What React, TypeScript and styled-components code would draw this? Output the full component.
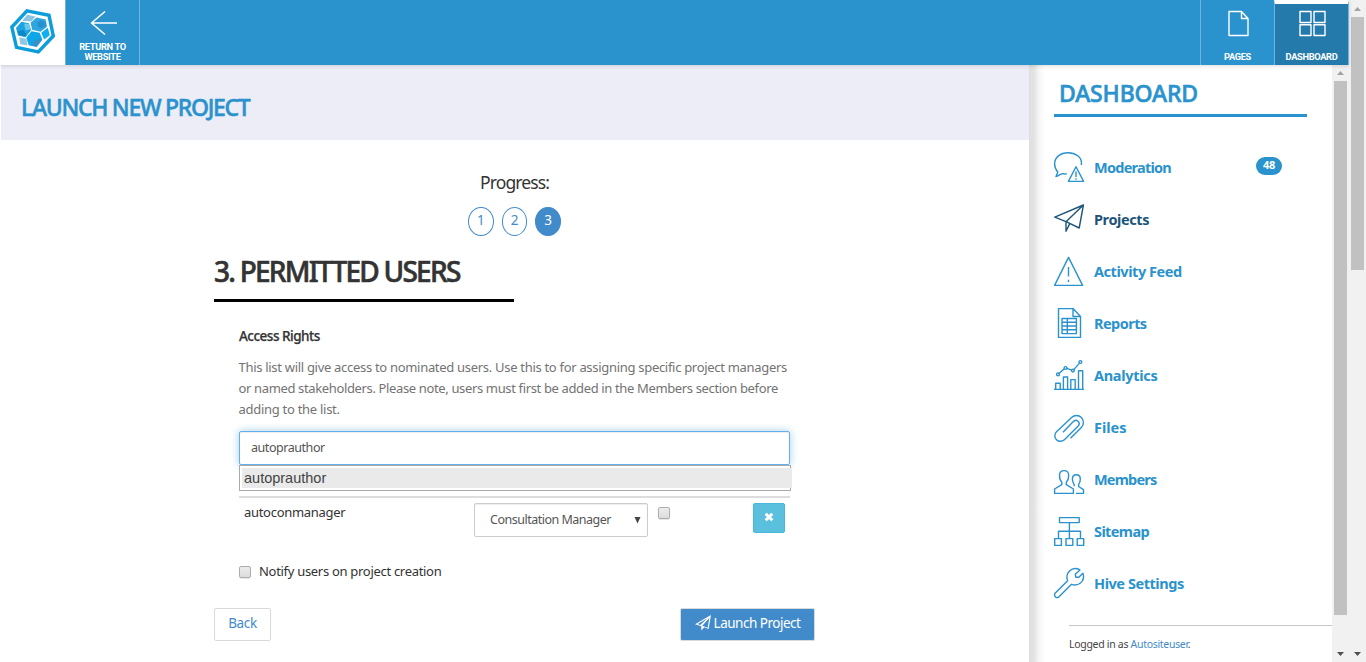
import React from 'react';
import styled, { createGlobalStyle, css } from 'styled-components';

const blue = '#2a92cc';
const link = '#428bca';

const GlobalStyle = createGlobalStyle`
  *, *::before, *::after { box-sizing: border-box; }
  html, body { margin: 0; height: 100%; overflow: hidden; background: #fff; }
  body { font-family: 'Noto Sans', 'Open Sans', sans-serif; font-size: 13px; color: #333; }
  h1, h2, h3, p, ul { margin: 0; padding: 0; font-weight: inherit; }
  button { font-family: inherit; margin: 0; }
`;

const Window = styled.div`
  display: flex;
  width: 1366px;
  height: 662px;
  overflow: hidden;
`;
const Page = styled.div`
  display: flex;
  flex-direction: column;
  width: 1349px;
`;
const TopBar = styled.header`
  display: flex;
  height: 65px;
  flex: none;
  background: ${blue};
  box-shadow: 0 1px 4px rgba(0, 0, 0, 0.14);
  z-index: 2;
`;
const LogoCell = styled.div`
  width: 65px;
  padding: 9px 0 0 10px;
  background: #fff;
`;
const Tile = styled.div<{ $active?: boolean; $last?: boolean }>`
  display: flex;
  flex-direction: column;
  align-items: center;
  justify-content: space-between;
  width: ${p => (p.$last ? 75 : 74)}px;
  padding: 10px 0 3px;
  border-left: 1px solid #6fb5dd;
  ${p => p.$last && css`border-right: 1px solid #6fb5dd;`}
  ${p => p.$active && css`
    background: #247bab;
    border-top: 4px solid #fff;
    padding-top: 6px;
  `}
`;
const TileLabel = styled.span`
  font-family: Roboto, 'Noto Sans', sans-serif;
  font-size: 9.3px;
  font-weight: 700;
  line-height: 10px;
  letter-spacing: -0.35px;
  color: #fff;
  text-align: center;
`;
const Spacer = styled.div`flex: 1;`;
const Columns = styled.div`
  display: flex;
  flex: 1;
  min-height: 0;
`;
const Main = styled.main`
  width: 1028px;
  margin-left: 1px;
`;
const TitleBand = styled.div`
  height: 75px;
  padding: 26px 20px 0;
  background: #ecedf6;
`;
const PageTitle = styled.h1`
  font-size: 23px;
  line-height: 32px;
  font-weight: 500;
  letter-spacing: -1.3px;
  color: ${blue};
  -webkit-text-stroke: 0.5px ${blue};
`;
const Wizard = styled.section`
  width: 601px;
  margin-left: 213px;
  padding-top: 29px;
`;
const ProgressLabel = styled.div`
  font-size: 17.5px;
  line-height: 26px;
  font-weight: 400;
  letter-spacing: -0.9px;
  text-align: center;
`;
const Steps = styled.div`
  display: flex;
  justify-content: center;
  gap: 8px;
  margin-top: 12px;
`;
const Step = styled.div<{ $current?: boolean }>`
  width: 25.7px;
  height: 29px;
  border: 1px solid ${link};
  border-radius: 50%;
  font-size: 13.5px;
  line-height: 25px;
  text-align: center;
  background: ${p => (p.$current ? link : '#fff')};
  color: ${p => (p.$current ? '#fff' : link)};
`;
const SectionTitle = styled.h2`
  width: 300px;
  margin-top: 15px;
  height: 51px;
  border-bottom: 3px solid #000;
  font-size: 28px;
  line-height: 41px;
  font-weight: 500;
  letter-spacing: -1.75px;
  -webkit-text-stroke: 0.6px #333;
  white-space: nowrap;
`;
const Fields = styled.div`
  width: 551px;
  margin: 25px 0 0 25px;
`;
const FieldTitle = styled.h3`
  font-size: 13.5px;
  line-height: 19px;
  font-weight: 500;
  letter-spacing: -0.5px;
  -webkit-text-stroke: 0.25px #333;
`;
const Help = styled.p`
  margin: 11px 0 0 -0.5px;
  color: #737373;
  line-height: 21px;
  white-space: nowrap;
`;
const HelpLine = styled.span<{ $ls: number }>`
  display: block;
  letter-spacing: ${p => p.$ls}px;
`;
const SearchBox = styled.div`
  height: 34px;
  margin-top: 11px;
  padding: 0 11px;
  border: 1px solid #66afe9;
  border-radius: 2px;
  box-shadow: inset 0 1px 1px rgba(0, 0, 0, 0.075), 0 0 8px rgba(102, 175, 233, 0.6);
  font-size: 12.5px;
  line-height: 31px;
  letter-spacing: -0.45px;
  color: #555;
`;
const Suggestions = styled.div`
  position: relative;
  width: 552px;
  height: 26px;
  padding: 2px;
  border: 1px solid #aaa;
  background: #fff;
`;
const Suggestion = styled.div`
  width: 550px;
  height: 20px;
  padding-left: 2px;
  background: #eaeaea;
  font: 14.5px/20px 'Liberation Sans', sans-serif;
  color: #444;
`;
const UserRow = styled.div`
  display: flex;
  align-items: flex-start;
  height: 56px;
  margin-top: 5px;
  padding: 5px 5px 0;
  border-top: 2px solid #ddd;
`;
const UserName = styled.div`
  width: 230px;
  line-height: 19px;
  letter-spacing: -0.3px;
`;
const RoleSelect = styled.div`
  display: flex;
  justify-content: space-between;
  width: 174px;
  height: 34px;
  padding: 0 6px 0 15px;
  border: 1px solid #ccc;
  border-radius: 2px;
  box-shadow: inset 0 1px 1px rgba(0, 0, 0, 0.075);
  font-size: 12.5px;
  line-height: 31px;
  letter-spacing: -0.5px;
  color: #555;
`;
const Caret = styled.svg`
  margin-top: 13px;
`;
const Check = styled.span`
  display: inline-block;
  flex: none;
  width: 12px;
  height: 12px;
  border: 1px solid #adadad;
  border-radius: 2px;
  background: linear-gradient(#ececec, #dcdcdc);
  box-shadow: 0 1px 1px rgba(0, 0, 0, 0.1);
`;
const RowCheck = styled(Check)`
  margin: 4px auto 0 10px;
`;
const RemoveButton = styled.button`
  display: flex;
  justify-content: center;
  width: 32px;
  height: 30px;
  padding: 8px 0 0;
  border: 1px solid #46b8da;
  border-radius: 2px;
  background: #5bc0de;
`;
const Notify = styled.label`
  display: flex;
  align-items: center;
  gap: 8px;
  height: 20px;
  margin-top: 10px;
  letter-spacing: -0.3px;
`;
const NotifyText = styled.span`
  padding-bottom: 2px;
`;
const Actions = styled.div`
  display: flex;
  justify-content: space-between;
  margin-top: 26px;
`;
const ActionButton = styled.button<{ $primary?: boolean }>`
  display: flex;
  align-items: flex-start;
  justify-content: center;
  gap: 3px;
  width: ${p => (p.$primary ? 135 : 57)}px;
  height: 33px;
  padding: 0;
  border: 1px solid #dadada;
  border-radius: 2px;
  font-size: 13.5px;
  line-height: 29px;
  letter-spacing: ${p => (p.$primary ? -0.5 : -0.35)}px;
  background: ${p => (p.$primary ? link : '#fff')};
  color: ${p => (p.$primary ? '#fff' : link)};
  svg { margin-top: 6px; }
`;
const Side = styled.aside`
  width: 303px;
  padding: 13px 0 0 25px;
  background: linear-gradient(90deg, #dedede 0, #e3e3e3 5px, #f6f6f6 10px, #fff 16px);
`;
const SideTitle = styled.h2`
  width: 253px;
  height: 39px;
  padding-left: 5px;
  border-bottom: 3px solid ${blue};
  font-size: 23px;
  line-height: 30px;
  font-weight: 500;
  letter-spacing: -0.15px;
  color: ${blue};
  -webkit-text-stroke: 0.6px ${blue};
`;
const Menu = styled.ul`
  list-style: none;
  margin-top: 35px;
`;
const MenuItem = styled.li<{ $active?: boolean }>`
  display: flex;
  align-items: flex-start;
  width: 228px;
  height: 52px;
  color: ${p => (p.$active ? '#1d5479' : blue)};
`;
const MenuLabel = styled.span<{ $ls: number }>`
  flex: 1;
  margin-left: 10px;
  font-size: 14.5px;
  font-weight: 700;
  line-height: 31px;
  letter-spacing: ${p => p.$ls}px;
`;
const Badge = styled.span`
  width: 26px;
  height: 18px;
  margin-top: 5px;
  border-radius: 9px;
  background: ${blue};
  color: #fff;
  font-size: 11px;
  font-weight: 700;
  line-height: 16px;
  letter-spacing: -0.3px;
  text-align: center;
`;
const Account = styled.div`
  margin: 5px 0 0 15px;
  padding-top: 10px;
  border-top: 1px solid #c6c6c6;
  font-size: 10.5px;
  line-height: 17px;
  letter-spacing: -0.3px;
  color: #444;
  a { color: ${link}; }
`;
const Scrollbar = styled.div<{ $top: number }>`
  display: flex;
  flex-direction: column;
  align-items: center;
  width: 17px;
  padding: ${p => p.$top}px 0 6px;
  background: #f1f1f1;
`;
const Thumb = styled.div<{ $h: number }>`
  width: 13px;
  height: ${p => p.$h}px;
  margin-top: 6px;
  background: #c1c1c1;
`;
const Icon = styled.svg<{ $weight?: number }>`
  flex: none;
  overflow: visible;
  fill: none;
  stroke: currentColor;
  stroke-width: ${p => p.$weight ?? 1.4};
  stroke-linejoin: round;
`;
const Glyph = styled(Icon)`
  margin-left: 2px;
  stroke: #fff;
`;

const Up = () => (
  <svg width="7" height="4" viewBox="0 0 7 4"><path d="M0 4 3.5 0 7 4z" fill="#a3a3a3" /></svg>
);
const Down = () => (
  <svg width="7" height="4" viewBox="0 0 7 4"><path d="M0 0h7L3.5 4z" fill="#505050" /></svg>
);

const Bar = ({ top, thumb }: { top: number; thumb: number }) => (
  <Scrollbar $top={top}>
    <Up />
    <Thumb $h={thumb} />
    <Spacer />
    <Down />
  </Scrollbar>
);

const Logo = () => (
  <svg width="45" height="45" viewBox="0 0 45 45">
    <path d="M17 1.8 39 6.3 43.3 27 28.3 43 6.5 38.3 1.8 18z" fill="#fff" stroke="#0d9ddb" strokeWidth="3.4" />
    <path d="M17.2 5.8 25.6 7.6 21.3 12.6 12.4 11.8z" fill="#8cc4e2" />
    <path d="M26.5 8.4 35.8 10.4 37 17.8 30.5 22.7 22.1 20.7 20.6 13.8z" fill="#2fa6de" />
    <path d="M11.4 12.8 18.8 14.3 21.1 21.2 15.5 28.2 8 26.5 6 19z" fill="#1ea3e0" />
    <path d="M14 14.5 19 15 20.6 20.4 15.6 21.3z" fill="#69c8f0" />
    <path d="M8 22 13.5 21 16.6 26.2 14.5 27.6 8.6 26z" fill="#0d87c9" />
    <path d="M21.5 22.2 29.6 23.8 32.4 30.8 26.6 38 18.7 36.2 16.3 28.8z" fill="#0ba7e8" />
    <path d="M23.5 32 30 29.5 31.4 31.3 26.5 37.6 22 36.5z" fill="#3b8fc9" />
    <path d="M27.5 13 31.5 11.3 35.3 13.3 35.4 17.3 31 19.6 27.4 17z" fill="#2592cf" />
    <path d="M37.8 18.8 39.8 26.2 34.1 30.4 31.3 23.7z" fill="#10aef0" />
    <path d="M9.2 28.2 16.3 29.7 17.6 36.6 10.3 35.2z" fill="#92c6e4" />
  </svg>
);

const icons: Record<string, React.ReactNode> = {
  Moderation: (
    <>
      <path d="M27.4 13V10.6C27.4 5 21.5.7 14 .7S.6 5.4.6 11.8c0 4 1.8 6.7 3.2 8.2L2 24.6c2.8-.4 4.3-3.6 7.7-2.8l3 .2" />
      <path d="M22 14.8 14.4 29.4H29.6zM22 19.5V25M22 26.3v1.4" />
    </>
  ),
  Projects: <path d="M29.4 1 .8 13.2 12 17.7 25.2 24zM29.4 1 12 17.7v9.5l3.8-7.6" />,
  'Activity Feed': <path d="M14.5 1.4.6 29.4H28.6zM14.5 11v9.5M14.5 23.8V26" />,
  Reports: (
    <>
      <path d="M4.5.6H19L26.5 8.5V29.4h-22zM19 .6V8.5h7.5" />
      <path d="M8 10.5H22.4V25.6H8zM13.3 10.5V25.6M8 14.3H22.4M8 18H22.4M8 21.8H22.4" />
    </>
  ),
  Analytics: (
    <>
      <path d="M0 29.4H30M1.7 29.4V23.3H6.2v6.1M9.4 29.4V17h4.2v12.4M16.8 29.4V19.6h4.4v9.8M24.5 29.4V10.7h4.2v18.7" />
      <path d="M5 13.6 10.3 8.8M12.7 8.4 17.7 10.2M19.8 9.6 25.5 3.1" />
      <circle cx="4" cy="14.4" r="1.4" /><circle cx="11.5" cy="8" r="1.4" />
      <circle cx="18.9" cy="10.6" r="1.4" /><circle cx="26.4" cy="2" r="1.4" />
    </>
  ),
  Files: (
    <path d="M16.5 26.3 27.4 15.4A6.9 6.9 0 0 0 17.6 5.6L2.5 19.7A5.6 5.6 0 0 0 10.4 27.7L24.2 14A3.3 3.3 0 0 0 19.3 9.5L9 20.2" />
  ),
  Members: (
    <>
      <path d="M.6 29.4V25L7.8 20.7V18.2C6 16.5 5.5 14.5 5.5 11.5 5.5 8.2 7.3 6.6 10 6.6s4.7 1.6 4.7 4.9c0 3-.7 5-2.4 6.7v2.5L19.4 25v4.4z" />
      <path d="M22 29.4H29.5V25.6L24.6 22.5V20.6C25.8 19 26.3 17.5 26.3 15 26.3 12 24.6 10.7 22.4 10.7S18.4 12 18.4 15c0 2.5.6 4 1.8 5.6v1.7" />
    </>
  ),
  Sitemap: (
    <path d="M5.5 1.6H25.2V6.6H5.5zM15.4 6.6V22.6M4.5 22.6V15.3H26.5v7.3M.7 22.6H7.4V29.4H.7zM12 22.6h6.8v6.8H12zM23.2 22.6h6.5v6.8H23.2z" />
  ),
  'Hive Settings': (
    <path d="M25.9 1.9 21.3 6.2 21.8 9.2 24.8 9.2 28.9 5.2C30.3 9 29 12.8 26.5 15 23.5 17.3 20.3 17.4 17.5 16.3L5 28.7A2.6 2.6 0 0 1 1.3 25L13.6 12.8C12.3 9.5 12.7 6 15.5 3 18.3.4 22.5.1 25.9 1.9z" />
  ),
};

const menu: { label: string; ls: number; badge?: string; active?: boolean }[] = [
  { label: 'Moderation', ls: -0.75, badge: '48' },
  { label: 'Projects', ls: -0.4, active: true },
  { label: 'Activity Feed', ls: -0.45 },
  { label: 'Reports', ls: -0.55 },
  { label: 'Analytics', ls: -0.3 },
  { label: 'Files', ls: 0 },
  { label: 'Members', ls: -0.8 },
  { label: 'Sitemap', ls: -0.6 },
  { label: 'Hive Settings', ls: -0.45 },
];

export default function App() {
  return (
    <Window>
      <GlobalStyle />
      <Page>
        <TopBar>
          <LogoCell><Logo /></LogoCell>
          <Tile $last>
            <Glyph $weight={1.6} width="27" height="26" viewBox="0 0 27 26">
              <path d="M27 13H1.5M15 1.5 1.5 13 15 24.5" />
            </Glyph>
            <TileLabel>RETURN TO<br />WEBSITE</TileLabel>
          </Tile>
          <Spacer />
          <Tile>
            <Glyph width="21" height="26" viewBox="0 0 21 26">
              <path d="M1 1.5H13.5L20 8.5V25.5H1zM13.5 1.5V8.5H20" />
            </Glyph>
            <TileLabel>PAGES</TileLabel>
          </Tile>
          <Tile $active $last>
            <Glyph width="27" height="26" viewBox="0 0 27 26">
              <path d="M1 1.5H12V12.5H1zM15 1.5H26V12.5H15zM1 14.8H12V25.5H1zM15 14.8H26V25.5H15z" />
            </Glyph>
            <TileLabel>DASHBOARD</TileLabel>
          </Tile>
        </TopBar>
        <Columns>
          <Main>
            <TitleBand><PageTitle>LAUNCH NEW PROJECT</PageTitle></TitleBand>
            <Wizard>
              <ProgressLabel>Progress:</ProgressLabel>
              <Steps>
                <Step>1</Step>
                <Step>2</Step>
                <Step $current>3</Step>
              </Steps>
              <SectionTitle>3. PERMITTED USERS</SectionTitle>
              <Fields>
                <FieldTitle>Access Rights</FieldTitle>
                <Help>
                  <HelpLine $ls={-0.3}>This list will give access to nominated users. Use this to for assigning specific project managers</HelpLine>
                  <HelpLine $ls={-0.36}>or named stakeholders. Please note, users must first be added in the Members section before</HelpLine>
                  <HelpLine $ls={-0.28}>adding to the list.</HelpLine>
                </Help>
                <SearchBox>autoprauthor</SearchBox>
                <Suggestions><Suggestion>autoprauthor</Suggestion></Suggestions>
                <UserRow>
                  <UserName>autoconmanager</UserName>
                  <RoleSelect>
                    Consultation Manager
                    <Caret width="7" height="7" viewBox="0 0 7 7"><path d="M.5 0h6L3.5 6.5z" fill="#444" /></Caret>
                  </RoleSelect>
                  <RowCheck />
                  <RemoveButton>
                    <svg width="10" height="10" viewBox="0 0 10 10">
                      <path d="M1.7 1.7 8.3 8.3M8.3 1.7 1.7 8.3" stroke="#fff" strokeWidth="3" />
                    </svg>
                  </RemoveButton>
                </UserRow>
                <Notify><Check /><NotifyText>Notify users on project creation</NotifyText></Notify>
              </Fields>
              <Actions>
                <ActionButton>Back</ActionButton>
                <ActionButton $primary>
                  <svg width="16" height="16" viewBox="0 0 16 16" fill="#fff">
                    <path fillRule="evenodd" d="M16 0 13.6 14 9.3 12.2 6.3 15.6V11.2L0 9.3zM12.6 3.3 2.6 8.9 5.2 9.9zM14.3 3 7.3 10.8 12.7 12.8z" />
                  </svg>
                  Launch Project
                </ActionButton>
              </Actions>
            </Wizard>
          </Main>
          <Side>
            <SideTitle>DASHBOARD</SideTitle>
            <Menu>
              {menu.map(m => (
                <MenuItem key={m.label} $active={m.active}>
                  <Icon width="30" height="30" viewBox="0 0 30 30">{icons[m.label]}</Icon>
                  <MenuLabel $ls={m.ls}>{m.label}</MenuLabel>
                  {m.badge && <Badge>{m.badge}</Badge>}
                </MenuItem>
              ))}
            </Menu>
            <Account>Logged in as <a>Autositeuser</a>.</Account>
          </Side>
          <Bar top={6} thumb={534} />
        </Columns>
      </Page>
      <Bar top={7} thumb={253} />
    </Window>
  );
}
